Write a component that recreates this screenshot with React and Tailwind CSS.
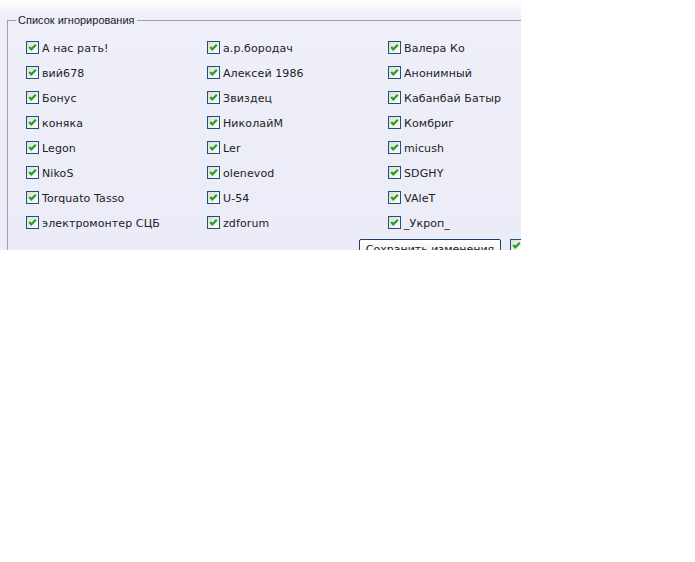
import React from "react";

const names = [
  "А нас рать!", "а.р.бородач", "Валера Ко",
  "вий678", "Алексей 1986", "Анонимный",
  "Бонус", "Звиздец", "Кабанбай Батыр",
  "коняка", "НиколайМ", "Комбриг",
  "Legon", "Ler", "micush",
  "NikoS", "olenevod", "SDGHY",
  "Torquato Tasso", "U-54", "VAleT",
  "электромонтер СЦБ", "zdforum", "_Укроп_",
];

const Check = () => (
  <svg width="13" height="13" viewBox="0 0 13 13" className="shrink-0">
    <defs>
      <linearGradient id="cb" x1="0" y1="0" x2="1" y2="1">
        <stop offset="0" stopColor="#dcdcd4" />
        <stop offset="1" stopColor="#ffffff" />
      </linearGradient>
    </defs>
    <rect x="0.5" y="0.5" width="12" height="12" fill="url(#cb)" stroke="#1c5180" />
    <polyline points="3.2,6 5.3,8.3 9.8,3.8" fill="none" stroke="#21a121" strokeWidth="2.2" />
  </svg>
);

export default function App() {
  return (
    <div className="w-[521px] h-[250px] overflow-hidden bg-[linear-gradient(to_bottom,#ffffff,#efeff9_14px,#ececf8)]">
      <fieldset className="ml-[7px] mt-[14px] w-[560px] border border-[#a0a0a8] pl-[18px] pt-[8px] pb-4">
        <legend className="-ml-[10px] px-[2px] text-[11px] leading-[13px] text-[#1a1a1a] font-['Liberation_Sans',sans-serif]">
          Список игнорирования
        </legend>
        <div className="grid grid-cols-[181px_181px_181px] font-['DejaVu_Sans',sans-serif] text-[11px] text-[#222]">
          {names.map((n) => (
            <label key={n} className="flex items-center gap-[3px] h-[25px]">
              <Check />
              <span className="pt-[3px] tracking-[0.1px]">{n}</span>
            </label>
          ))}
        </div>
        <div className="flex items-start gap-[9px] pl-[333px] mt-[4px]">
          <button className="w-[142px] h-[22px] border border-[#1c3c6c] rounded-[2px] bg-[linear-gradient(to_bottom,#ffffff,#ecebe6)] text-[11px] text-[#1a1a1a] font-['DejaVu_Sans',sans-serif]">
            Сохранить изменения
          </button>
          <Check />
        </div>
      </fieldset>
    </div>
  );
}
